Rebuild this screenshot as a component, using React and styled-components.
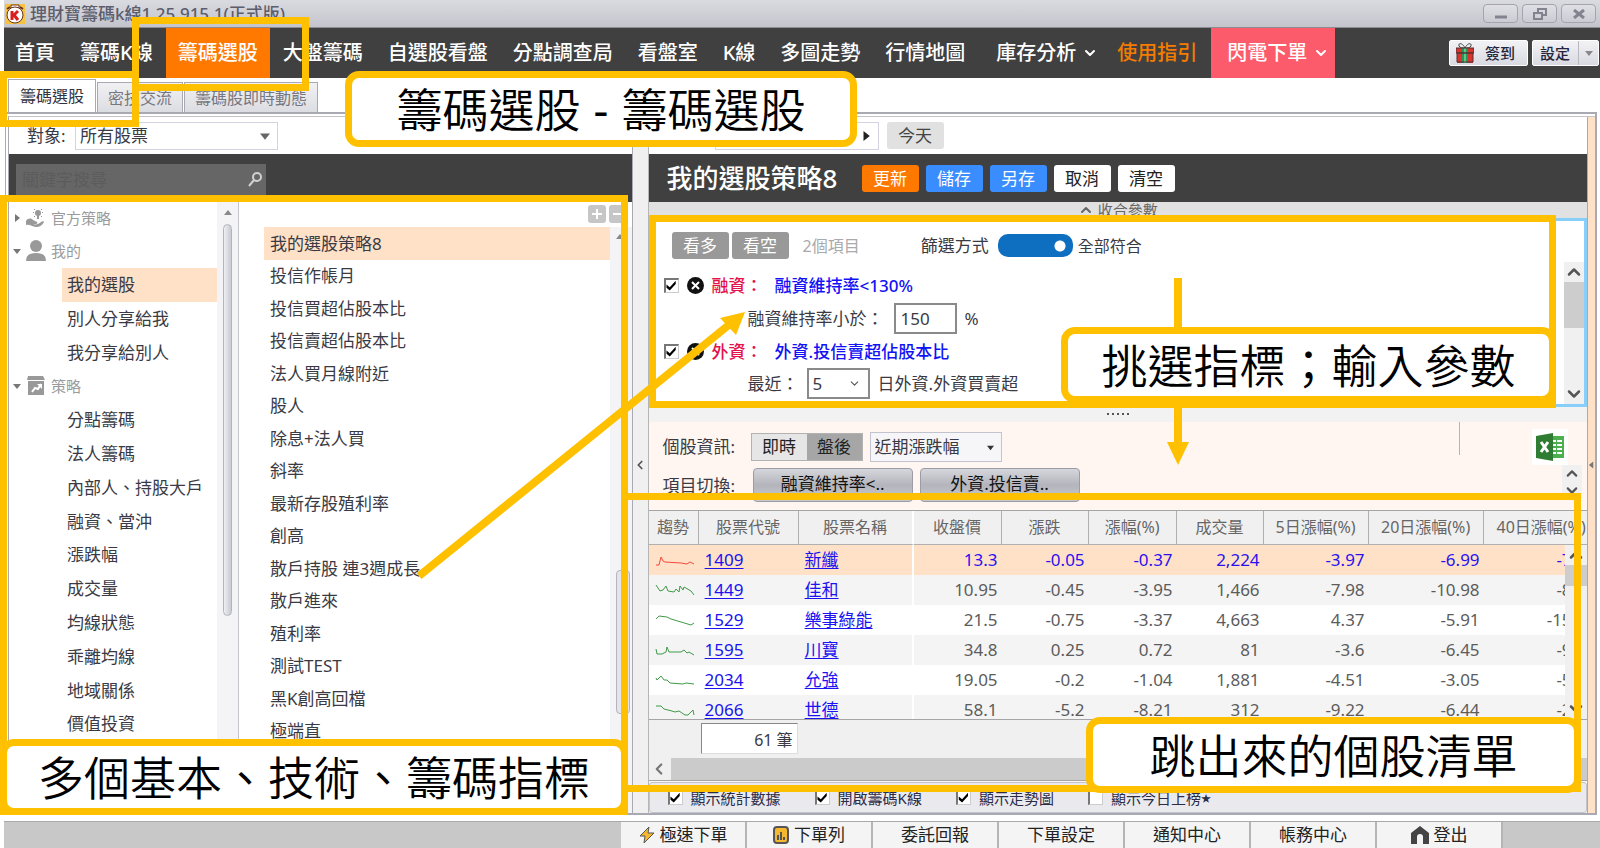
import React from 'react'
import styled, { createGlobalStyle, css } from 'styled-components'
import { ChevronDown, ChevronLeft, ChevronUp } from 'lucide-react'

const GlobalStyle = createGlobalStyle`
  * {
    box-sizing: border-box;
  }
  body {
    margin: 0;
    background: #fff;
    color: #3a3a44;
    font-family: 'Noto Sans', 'Noto Sans CJK TC', sans-serif;
    font-size: 17px;
    line-height: 24px;
  }
  button, input, select {
    font: inherit;
    color: inherit;
    margin: 0;
    padding: 0;
    border: 0;
    border-radius: 0;
  }
`

const Page = styled.div`
  position: relative;
  display: flex;
  flex-direction: column;
  min-height: 100vh;
  overflow: hidden;
  padding-left: 4px;
  white-space: nowrap;
`

/* ---------- title bar ---------- */

const TitleBar = styled.header`
  display: flex;
  align-items: center;
  height: 28px;
  padding: 0 4px 0 1px;
  gap: 5px;
  border-bottom: 1px solid #8c8c90;
  background: linear-gradient(#dadbe1, #c4c5cc);
`
const AppTitle = styled.h1`
  flex: 1;
  margin: 0;
  font-size: 17px;
  font-weight: 500;
  color: #5d5d6c;
`
const WindowButton = styled.button`
  display: flex;
  align-items: center;
  justify-content: center;
  width: 35px;
  height: 19px;
  margin-left: -1px;
  border: 1px solid #a4a4ae;
  border-radius: 4px;
  background: linear-gradient(#dfdfe5, #cbccd3);
`

/* ---------- main navigation ---------- */

const Nav = styled.nav`
  display: flex;
  align-items: center;
  height: 50px;
  gap: 1px;
  background: #404040;
`
const NavLink = styled.a`
  display: flex;
  align-items: center;
  gap: 6px;
  height: 100%;
  padding: ${(props) => props.$pad || '0 12px'};
  background: ${(props) => props.$bg || 'transparent'};
  color: ${(props) => props.$color || '#fff'};
  font-size: 20px;
  font-weight: 500;
  text-decoration: none;
`
const NavTools = styled.div`
  display: flex;
  gap: 4px;
  margin-left: auto;
  padding-right: 1px;
`
const ToolButton = styled.button`
  display: flex;
  align-items: center;
  justify-content: center;
  gap: ${(props) => (props.$split ? '8px' : '11px')};
  height: 26px;
  padding: 0 ${(props) => (props.$split ? '0' : '12px')} 0 ${(props) => (props.$split ? '7px' : '6px')};
  border: 1px solid #fff;
  border-radius: 2px;
  background: linear-gradient(#f2f2f6, #d9dae1);
  color: #24243c;
  font-size: 15px;
  font-weight: 500;
  line-height: 22px;
`
const SplitArrow = styled.span`
  display: flex;
  align-items: center;
  justify-content: center;
  width: 20px;
  height: 100%;
  border-left: 1px solid #b7b7c0;
`

/* ---------- tabs ---------- */

const Tabs = styled.div`
  display: flex;
  align-items: flex-end;
  height: 34px;
  padding-left: 4px;
`
const Tab = styled.button`
  height: ${(props) => (props.$active ? '33px' : '30px')};
  padding: 0 ${(props) => (props.$active ? '11px' : '10px')};
  border: 1px solid #a9a9b3;
  border-bottom: 0;
  margin-right: 1px;
  background: ${(props) => (props.$active ? '#fff' : 'linear-gradient(#f1f1f4, #dcdde2)')};
  color: ${(props) => (props.$active ? '#33333f' : '#77777f')};
  font-size: 16px;
`

/* ---------- work area ---------- */

const Frame = styled.div`
  flex: 1;
  display: flex;
  margin: 0 3px 0 1px;
  padding: 2px 0 0 2px;
  border: 2px solid #a9a9b3;
  border-left-width: 1px;
`
const Work = styled.main`
  flex: 1;
  display: flex;
  min-width: 0;
  border-top: 1px solid #c4c4c8;
  border-left: 1px solid #a9a9b3;
`
const LeftPane = styled.section`
  flex: 623 1 0;
  min-width: 0;
  display: flex;
  flex-direction: column;
  border-right: 1px solid #a9a9b3;
`
const VerticalSplit = styled.div`
  display: flex;
  align-items: center;
  justify-content: center;
  width: 16px;
  background: #f0f0f0;
  border-right: 1px solid #b5b5b5;
`
const RightPane = styled.section`
  flex: 939 1 0;
  min-width: 0;
  display: flex;
  flex-direction: column;
`
const SideStrip = styled.div`
  display: flex;
  align-items: center;
  justify-content: center;
  width: 8px;
  background: #ffe1c8;
  border-left: 1px solid #a9a9b3;
`
const FilterRow = styled.div`
  display: flex;
  align-items: center;
  height: 37px;
  gap: 8px;
  padding-left: ${(props) => props.$indent};
`
const SelectWrap = styled.span`
  display: grid;
  align-items: center;
  width: ${(props) => props.$width};
  height: ${(props) => props.$height || '28px'};
  border: ${(props) => props.$border || '1px solid #d3d3e2'};
  background: ${(props) => props.$bg || '#fff'};
  > * {
    grid-area: 1 / 1;
  }
  > svg {
    justify-self: end;
    margin-right: 7px;
    pointer-events: none;
  }
`
const Select = styled.select`
  appearance: none;
  width: 100%;
  padding-left: 4px;
  background: none;
  outline: none;
`
const TargetLabel = styled.label`
  width: 40px;
`
const SearchBar = styled.div`
  height: 48px;
  padding: 10px 7px;
  background: #404040;
`
const SearchBox = styled.label`
  display: flex;
  align-items: center;
  width: 250px;
  height: 31px;
  padding: 0 4px 0 6px;
  background: #666;
`
const SearchInput = styled.input`
  flex: 1;
  min-width: 0;
  background: none;
  outline: none;
  &::placeholder {
    color: #5c5c5c;
    opacity: 1;
  }
`
const LeftBody = styled.div`
  flex: 1;
  display: flex;
`
const Tree = styled.ul`
  width: 208px;
  margin: 0;
  padding: 0;
  list-style: none;
`
const TreeRow = styled.li`
  display: flex;
  align-items: center;
  height: 34px;
  margin-left: ${(props) => (props.$group ? '4px' : '53px')};
  padding-left: ${(props) => (props.$group ? '0' : '5px')};
  gap: 5px;
  background: ${(props) => (props.$selected ? '#ffe1c8' : 'none')};
  &:first-child {
    height: 32px;
  }
  &:nth-child(5n) {
    height: 33px;
  }
  ${(props) =>
    props.$group &&
    css`
      color: #9b9b9b;
      font-size: 15px;
    `}
`
const TreeScroll = styled.div`
  display: flex;
  flex-direction: column;
  align-items: center;
  width: 22px;
  padding-top: 7px;
  gap: 7px;
  background: #f4f4f7;
  border-right: 1px solid #c4c4cb;
`
const RoundThumb = styled.span`
  width: 9px;
  height: 392px;
  border: 1px solid #b3b4bf;
  border-radius: 5px;
  background: linear-gradient(90deg, #eeeff2, #c9cad2);
`
const Strategies = styled.div`
  flex: 1;
  display: grid;
  grid-template-columns: 1fr 22px;
  grid-template-rows: 25px 1fr;
  padding-left: 25px;
`
const ListTools = styled.div`
  grid-column: 1 / 3;
  display: flex;
  justify-content: flex-end;
  align-items: center;
  gap: 3px;
  padding: 0 5px 2px 0;
`
const SquareButton = styled.button`
  display: flex;
  align-items: center;
  justify-content: center;
  width: 18px;
  height: 18px;
  border-radius: 3px;
  background: #c6c6c6;
`
const StrategyList = styled.ul`
  margin: 0;
  padding: 0;
  list-style: none;
`
const StrategyRow = styled.li`
  display: flex;
  align-items: center;
  height: 33px;
  padding-left: 6px;
  background: ${(props) => (props.$selected ? '#ffe1c8' : 'none')};
  &:nth-child(even) {
    height: 32px;
  }
`
const ListScroll = styled.div`
  display: flex;
  flex-direction: column;
  padding: 6px 0 0 6px;
  gap: 329px;
  background: #f4f4f7;
`
const ListThumb = styled.span`
  width: 14px;
  height: 144px;
  border: 1px solid #b3b4bf;
  border-radius: 4px;
  background: #e4e4ea;
`

/* ---------- strategy head ---------- */

const DateBox = styled.div`
  display: flex;
  align-items: center;
  justify-content: flex-end;
  width: 164px;
  height: 28px;
  padding-right: 7px;
  border: 1px solid #d3d3e2;
`
const PushButton = styled.button`
  width: 57px;
  height: 27px;
  border-radius: 3px;
  background: ${(props) => props.$bg};
  color: ${(props) => props.$color || '#fff'};
  line-height: 25px;
`
const StrategyHead = styled.div`
  display: flex;
  align-items: center;
  height: 48px;
  gap: 7px;
  padding-left: 18px;
  background: #404040;
`
const StrategyName = styled.h2`
  width: 188px;
  margin: 0;
  color: #fff;
  font-size: 26px;
  font-weight: 500;
`
const CollapseBar = styled.button`
  display: flex;
  align-items: center;
  justify-content: center;
  gap: 4px;
  height: 16px;
  background: #e1e1e1;
  color: #666;
  font-size: 15px;
  line-height: 16px;
`

/* ---------- parameters ---------- */

const Params = styled.div`
  display: flex;
  flex-direction: column;
  height: 189px;
  border: 3px solid #87cefa;
  overflow: hidden;
`
const ParamTools = styled.div`
  display: flex;
  align-items: center;
  height: 41px;
  padding: 8px 0 0 20px;
  gap: 3px;
`
const ItemCount = styled.span`
  margin: 0 58px 0 11px;
  color: #aaa;
  font-size: 16px;
`
const Switch = styled.input`
  appearance: none;
  width: 75px;
  height: 23px;
  margin: 0 2px 0 6px;
  border-radius: 10px;
  background: radial-gradient(circle at 62px 12px, #fff 5px, #0e6fc0 6px);
`
const SmallText = styled.span`
  font-size: 16px;
`
const ParamScroller = styled.div`
  flex: 1;
  display: flex;
  min-height: 0;
`
const ParamList = styled.div`
  flex: 1;
  padding: 7px 0 0 12px;
`
const ParamRow = styled.div`
  display: flex;
  align-items: center;
  height: 33px;
  gap: 8px;
  padding-left: ${(props) => (props.$nested ? '84px' : '0')};
  &:last-child {
    height: 31px;
  }
`
const Check = styled.input`
  appearance: none;
  width: 15px;
  height: 15px;
  flex: none;
  background: #fff;
  border: 1px solid #ccc;
  border-top: 2px solid #777;
  border-left: 2px solid #777;
  &:checked::after {
    content: '';
    display: block;
    width: 11px;
    height: 11px;
    background: #000;
    clip-path: polygon(8% 40%, 38% 66%, 92% 6%, 92% 36%, 38% 96%, 8% 70%);
  }
`
const ParamGroup = styled.span`
  width: 55px;
  color: #e4114b;
  font-weight: 500;
`
const ParamName = styled.span`
  color: #1212f5;
  font-weight: 500;
`
const NumberInput = styled.input`
  width: 63px;
  height: 31px;
  margin-left: 2px;
  padding-left: 5px;
  border: 2px solid #8a8a8a;
  outline: none;
`

const FlatScroll = styled.div`
  display: flex;
  flex-direction: column;
  align-items: center;
  justify-content: space-between;
  width: 20px;
  flex: none;
  background: #f0f0f0;
`
const FlatThumb = styled.span`
  width: 100%;
  height: ${(props) => props.$height};
  margin-bottom: auto;
  background: #cdcdcd;
`
const MiniScroll = styled(FlatScroll)`
  height: 34px;
  margin: -3px 0 0 auto;
`
const HorizontalSplit = styled.div`
  display: flex;
  justify-content: center;
  height: 15px;
  gap: 3px;
  padding-top: 6px;
  background: #f2f2f2;
  span {
    width: 2px;
    height: 2px;
    background: #555;
  }
`

/* ---------- results ---------- */

const Results = styled.div`
  flex: 1;
  display: flex;
  flex-direction: column;
  background: #fff6f2;
`
const InfoRow = styled.div`
  display: flex;
  align-items: center;
  height: 46px;
  padding: 10px 19px 6px 14px;
`
const SwitchRow = styled.div`
  display: flex;
  align-items: flex-start;
  height: 42px;
  padding: 0 5px 0 14px;
`
const RowLabel = styled.span`
  width: 88px;
  line-height: 36px;
`
const Segment = styled.div`
  display: flex;
  height: 28px;
  margin-right: 7px;
  border: 1px solid #b2b2b2;
`
const SegmentButton = styled.button`
  width: 55px;
  background: ${(props) => (props.$active ? '#a6a6a6' : '#e6e6e6')};
  color: #222;
`
const Divider = styled.span`
  align-self: flex-start;
  width: 1px;
  height: 33px;
  margin: -10px 72px 0 auto;
  background: #b5b5b5;
`
const ExcelButton = styled.button`
  display: flex;
  align-items: center;
  justify-content: center;
  width: 36px;
  height: 36px;
  background: #fff;
`
const GradientButton = styled.button`
  width: 160px;
  height: 34px;
  margin: 0 5px 0 2px;
  padding-bottom: 3px;
  border: 1px solid #9b9ca6;
  border-radius: 4px;
  background: linear-gradient(#d6d7dc, #b4b5bc 50%, #c9cacf);
  color: #111;
`
const TableArea = styled.div`
  position: relative;
  height: 210px;
  overflow: hidden;
  background: #fff;
  border-top: 1px solid #a5a5a5;
  border-bottom: 1px solid #a5a5a5;
`
const Table = styled.table`
  width: 951px;
  table-layout: fixed;
  border-collapse: separate;
  border-spacing: 0;
`
const HeadCell = styled.th`
  width: ${(props) => props.$width};
  height: 34px;
  padding: 0 0 2px;
  border-right: 1px solid #b0b0b0;
  border-bottom: 1px solid #b0b0b0;
  background: #f0f0f0;
  color: #666;
  font-size: 16px;
  font-weight: 400;
  &:nth-child(3) {
    border-right: 2px solid #fff;
  }
`
const Row = styled.tr`
  height: 30px;
  background: ${(props) => (props.$selected ? '#ffe1c8' : '#fff')};
  color: ${(props) => (props.$selected ? '#2a12f0' : '#5c5c5c')};
  &:nth-child(even) {
    background: #f4f4f4;
  }
`
const Cell = styled.td`
  height: 30px;
  padding: 0 4px 0 6px;
  text-align: ${(props) => (props.$left ? 'left' : 'right')};
  &:nth-child(3) {
    border-right: 2px solid #fff;
  }
  a {
    color: #1a12f0;
    text-underline-offset: 2px;
  }
  svg {
    display: block;
  }
`
const TableScroll = styled(FlatScroll)`
  position: absolute;
  top: 34px;
  right: 0;
  bottom: 0;
  width: 22px;
`
const TableFooter = styled.div`
  display: flex;
  height: 38px;
  padding: 3px 52px;
  background: #f0f0f0;
`
const TotalInput = styled.input`
  width: 97px;
  height: 31px;
  padding-right: 4px;
  border: 1px solid #ddd;
  border-top-color: #888;
  border-left-color: #888;
  text-align: right;
  font-size: 16px;
`
const WideScroll = styled.div`
  display: flex;
  align-items: center;
  height: 23px;
  background: #f0f0f0;
  border-bottom: 1px solid #a5a5a5;
  gap: 3px;
  padding-left: 1px;
`
const WideThumb = styled.span`
  flex: 1;
  height: 100%;
  background: #cbcbcb;
`
const Options = styled.div`
  flex: 1;
  display: flex;
  align-items: center;
  min-height: 30px;
  margin-top: 1px;
  padding-left: 18px;
  border: 1px solid #c3c4cc;
  border-radius: 3px;
  background: #eaeaee;
  gap: 34px;
`
const Option = styled.label`
  display: flex;
  align-items: center;
  color: #2c2c48;
  font-size: 15px;
  input {
    margin-right: 8px;
  }
`
const Star = styled.span`
  font-size: 10px;
`

/* ---------- bottom bar ---------- */

const BottomBar = styled.footer`
  display: flex;
  height: 27px;
  margin-top: 6px;
  padding-left: 617px;
  border-top: 1px solid #a9a9ac;
  background: #c8c8c8;
`
const BottomButton = styled.button`
  display: flex;
  align-items: center;
  justify-content: center;
  gap: 5px;
  width: 126px;
  border-right: 2px solid #b5b5b5;
  background: #f4f4f4;
  color: #222;
`

/* ---------- guide layer drawn over the app ---------- */

const Guide = styled.div`
  position: absolute;
  inset: 0;
  pointer-events: none;
`
const Box = styled.div`
  position: absolute;
  left: ${(props) => props.$x}px;
  top: ${(props) => props.$y}px;
  width: ${(props) => props.$w}px;
  height: ${(props) => props.$h}px;
  border: 7px solid #ffc000;
`
const Callout = styled(Box)`
  display: flex;
  align-items: center;
  justify-content: center;
  padding-top: 4px;
  border-radius: 14px;
  background: #fff;
  color: #000;
  font-family: 'Liberation Sans', 'Noto Sans CJK TC', sans-serif;
  font-size: 46px;
  font-weight: 350;
  line-height: 56px;
`
const Arrows = styled.svg`
  position: absolute;
  left: 0;
  top: 0;
`

const NAV = [
  { text: '首頁', pad: '0 12px 0 11px' },
  { text: '籌碼K線' },
  { text: '籌碼選股', bg: '#ff7800' },
  { text: '大盤籌碼' },
  { text: '自選股看盤' },
  { text: '分點調查局' },
  { text: '看盤室' },
  { text: 'K線' },
  { text: '多圖走勢' },
  { text: '行情地圖' },
  { text: '庫存分析', pad: '0 4px 0 18px', arrow: true },
  { text: '使用指引', color: '#f57c00', pad: '0 13px 0 14px' },
  { text: '閃電下單', bg: '#fc5b6b', pad: '0 6px 0 16px', arrow: true },
]

const TREE = [
  { text: '官方策略', icon: 'hand' },
  { text: '我的', icon: 'user', open: true },
  { text: '我的選股', selected: true },
  { text: '別人分享給我' },
  { text: '我分享給別人' },
  { text: '策略', icon: 'store', open: true },
  { text: '分點籌碼' },
  { text: '法人籌碼' },
  { text: '內部人、持股大戶' },
  { text: '融資、當沖' },
  { text: '漲跌幅' },
  { text: '成交量' },
  { text: '均線狀態' },
  { text: '乖離均線' },
  { text: '地域關係' },
  { text: '價值投資' },
]

const STRATEGIES = [
  '我的選股策略8', '投信作帳月', '投信買超佔股本比', '投信賣超佔股本比',
  '法人買月線附近', '股人', '除息+法人買', '斜率', '最新存股殖利率', '創高',
  '散戶持股 連3週成長', '散戶進來', '殖利率', '測試TEST', '黑K創高回檔', '極端直',
]

const COLUMNS = [
  ['趨勢', '50px'], ['股票代號', '100px'], ['股票名稱', '115px'], ['收盤價', '88px'],
  ['漲跌', '87px'], ['漲幅(%)', '88px'], ['成交量', '87px'], ['5日漲幅(%)', '105px'],
  ['20日漲幅(%)', '115px'], ['40日漲幅(%)', '116px'],
]

const STOCKS = [
  { id: '1409', name: '新纖', values: ['13.3', '-0.05', '-0.37', '2,224', '-3.97', '-6.99', '-7.01'], line: '1,13 4,13 6,5 8,9 10,10 26,11 32,12 35,10 39,12' },
  { id: '1449', name: '佳和', values: ['10.95', '-0.45', '-3.95', '1,466', '-7.98', '-10.98', '-8.06'], line: '1,3 5,9 8,8 11,4 13,9 19,10 21,7 24,10 25,4 28,8 29,5 36,9 39,13' },
  { id: '1529', name: '樂事綠能', values: ['21.5', '-0.75', '-3.37', '4,663', '4.37', '-5.91', '-15.02'], line: '1,7 4,4 12,5 16,7 26,10 36,13 39,11' },
  { id: '1595', name: '川寶', values: ['34.8', '0.25', '0.72', '81', '-3.6', '-6.45', '-9.11'], line: '1,7 2,12 7,12 11,10 12,5 14,10 26,10 29,8 32,11 34,10 39,13' },
  { id: '2034', name: '允強', values: ['19.05', '-0.2', '-1.04', '1,881', '-4.51', '-3.05', '-5.08'], line: '1,6 2,8 6,4 9,8 12,8 15,11 28,12 31,11 39,12' },
  { id: '2066', name: '世德', values: ['58.1', '-5.2', '-8.21', '312', '-9.22', '-6.44', '-2.30'], line: '1,4 6,4 9,7 17,9 20,10 24,9 30,13 33,13 38,8 39,13' },
]

function Triangle({ dir = 'down', size = 8, color = '#666' }) {
  const paths = { down: 'M0 2h8L4 7z', up: 'M0 6h8L4 1z', right: 'M2 0v8l5-4z', left: 'M6 0v8L1 4z' }
  return (
    <svg width={size} height={size} viewBox="0 0 8 8" aria-hidden="true">
      <path d={paths[dir]} fill={color} />
    </svg>
  )
}

function TreeIcon({ name }) {
  return (
    <svg width="20" height="22" viewBox="0 0 20 22" fill="#999" aria-hidden="true">
      {name === 'hand' && (
        <>
          <path d="M0 14c2-3 5-3 7-1l4 2c1 1 0 2-1 2H7c3 1 6 0 8-2 1-1 3-1 3 0-2 4-5 5-8 5-4 0-6-3-10-2z" />
          <circle cx="12" cy="6" r="3" />
          <path d="M11 8h2v4h-2zM7 5h1v1H7zM16 5h1v1h-1zM8 2h1v1H8zM15 2h1v1h-1zM8 9h1v1H8zM15 9h1v1h-1z" />
        </>
      )}
      {name === 'user' && (
        <>
          <circle cx="10" cy="6" r="6" />
          <path d="M0 21c0-6 4-8 10-8s10 2 10 8z" />
        </>
      )}
      {name === 'store' && (
        <>
          <path d="M2 1h15l2 4H1zM2 6h16v14H2z" />
          <path d="M6 17l3-4 3 1 3-5" fill="none" stroke="#fff" strokeWidth="2" />
          <path d="M11 9h5v5z" fill="#fff" />
        </>
      )}
    </svg>
  )
}

function Gift() {
  return (
    <svg width="18" height="20" viewBox="0 0 18 20" aria-hidden="true">
      <path d="M9 5C6-1 2 0 3 3c1 2 4 2 6 2 2 0 5 0 6-2 1-3-3-4-6 2z" fill="#eee" stroke="#444" />
      <path d="M0 5h18v5H0zM1 10h16v10H1z" fill="#d6342c" />
      <path d="M6 5h6v15H6z" fill="#27955a" />
      <path d="M8 5h2v15H8z" fill="#62c58a" />
      <path d="M0 5h18v5H0zM1 10h16v9H1z" fill="none" stroke="#503030" />
    </svg>
  )
}

function AppLogo() {
  return (
    <svg width="20" height="20" viewBox="0 0 20 20" aria-hidden="true">
      <path d="M0 0h20v20H0z" fill="#f5c242" />
      <path d="M6 1h8v3H6z" fill="#fff" stroke="#6a3320" />
      <path d="M2 5l3-2M18 5l-3-2" stroke="#6a3320" strokeWidth="2" />
      <circle cx="10" cy="11" r="8" fill="#fff" stroke="#6a3320" />
      <path d="M7 7v9M13 7l-4 4 4 5" fill="none" stroke="#d81e1e" strokeWidth="3" />
    </svg>
  )
}

function ExcelIcon() {
  return (
    <svg width="28" height="28" viewBox="0 0 28 28" aria-hidden="true">
      <path d="M15 3h13v22H15z" fill="#4caf50" />
      <path d="M16 7h4v2h-4zM21 7h5v2h-5zM16 11h4v2h-4zM21 11h5v2h-5zM16 15h4v2h-4zM21 15h5v2h-5zM16 19h4v2h-4zM21 19h5v2h-5z" fill="#fff" />
      <path d="M0 3L17 0v28L0 25z" fill="#2e7d32" />
      <path d="M5 9l7 10M12 9L5 19" stroke="#fff" strokeWidth="3" />
    </svg>
  )
}

function RemoveIcon() {
  return (
    <svg width="17" height="17" viewBox="0 0 17 17" aria-hidden="true">
      <circle cx="8.5" cy="8.5" r="8.5" fill="#111" />
      <path d="M5 5l7 7M12 5l-7 7" stroke="#fff" strokeWidth="2" />
    </svg>
  )
}

function LeftSide() {
  return (
    <LeftPane>
      <FilterRow $indent="18px">
        <TargetLabel htmlFor="target">對象:</TargetLabel>
        <SelectWrap $width="203px">
          <Select id="target"><option>所有股票</option></Select>
          <Triangle size={10} />
        </SelectWrap>
      </FilterRow>
      <SearchBar>
        <SearchBox>
          <SearchInput placeholder="關鍵字搜尋" aria-label="關鍵字搜尋" />
          <svg width="14" height="16" viewBox="0 0 14 16" fill="none" stroke="#d0d0d0" strokeWidth="2">
            <circle cx="9" cy="5" r="4" />
            <path d="M6 8l-5 6" />
          </svg>
        </SearchBox>
      </SearchBar>
      <LeftBody>
        <Tree>
          {TREE.map((item) => (
            <TreeRow key={item.text} $group={!!item.icon} $selected={item.selected}>
              {item.icon && <Triangle dir={item.open ? 'down' : 'right'} color="#777" />}
              {item.icon && <TreeIcon name={item.icon} />}
              {item.text}
            </TreeRow>
          ))}
        </Tree>
        <TreeScroll>
          <Triangle dir="up" color="#888" />
          <RoundThumb />
        </TreeScroll>
        <Strategies>
          <ListTools>
            <SquareButton aria-label="新增">
              <svg width="10" height="10"><path d="M5 0v10M0 5h10" stroke="#fff" strokeWidth="2" /></svg>
            </SquareButton>
            <SquareButton aria-label="移除">
              <svg width="10" height="10"><path d="M0 5h10" stroke="#fff" strokeWidth="2" /></svg>
            </SquareButton>
          </ListTools>
          <StrategyList>
            {STRATEGIES.map((name, i) => (
              <StrategyRow key={name} $selected={i === 0}>{name}</StrategyRow>
            ))}
          </StrategyList>
          <ListScroll>
            <Triangle dir="up" color="#888" />
            <ListThumb />
          </ListScroll>
        </Strategies>
      </LeftBody>
    </LeftPane>
  )
}

function ParamPanel() {
  return (
    <Params>
      <ParamTools>
        <PushButton $bg="#999">看多</PushButton>
        <PushButton $bg="#999">看空</PushButton>
        <ItemCount>2個項目</ItemCount>
        <label htmlFor="match">篩選方式</label>
        <Switch id="match" type="checkbox" defaultChecked />
        <SmallText>全部符合</SmallText>
      </ParamTools>
      <ParamScroller>
        <ParamList>
          <ParamRow>
            <Check type="checkbox" defaultChecked aria-label="融資維持率<130%" />
            <RemoveIcon />
            <ParamGroup>融資：</ParamGroup>
            <ParamName>融資維持率&lt;130%</ParamName>
          </ParamRow>
          <ParamRow $nested>
            <label htmlFor="rate">融資維持率小於：</label>
            <NumberInput id="rate" defaultValue="150" />
            <span>%</span>
          </ParamRow>
          <ParamRow>
            <Check type="checkbox" defaultChecked aria-label="外資.投信賣超佔股本比" />
            <RemoveIcon />
            <ParamGroup>外資：</ParamGroup>
            <ParamName>外資.投信賣超佔股本比</ParamName>
          </ParamRow>
          <ParamRow $nested>
            <label htmlFor="days">最近：</label>
            <SelectWrap $width="63px" $height="31px" $border="2px solid #8a8a8a">
              <Select id="days"><option>5</option></Select>
              <ChevronDown size={13} color="#555" />
            </SelectWrap>
            <span>日外資.外資買賣超</span>
          </ParamRow>
        </ParamList>
        <FlatScroll>
          <ChevronUp size={20} color="#555" strokeWidth={3} />
          <FlatThumb $height="46px" />
          <ChevronDown size={20} color="#555" strokeWidth={3} />
        </FlatScroll>
      </ParamScroller>
    </Params>
  )
}

function StockTable() {
  return (
    <TableArea>
      <Table>
        <thead>
          <tr>
            {COLUMNS.map(([text, width]) => <HeadCell key={text} $width={width}>{text}</HeadCell>)}
          </tr>
        </thead>
        <tbody>
          {STOCKS.map((stock, i) => (
            <Row key={stock.id} $selected={i === 0}>
              <Cell $left>
                <svg width="40" height="16" viewBox="0 0 40 16">
                  <polyline points={stock.line} fill="none" stroke={i === 0 ? '#f5483c' : '#3f9a48'} />
                </svg>
              </Cell>
              <Cell $left><a href="#stock">{stock.id}</a></Cell>
              <Cell $left><a href="#stock">{stock.name}</a></Cell>
              {stock.values.map((value, n) => <Cell key={n}>{value}</Cell>)}
            </Row>
          ))}
        </tbody>
      </Table>
      <TableScroll>
        <ChevronUp size={20} color="#555" strokeWidth={3} />
        <FlatThumb $height="21px" />
        <ChevronDown size={20} color="#555" strokeWidth={3} />
      </TableScroll>
    </TableArea>
  )
}

function ResultPanel() {
  return (
    <Results>
      <InfoRow>
        <RowLabel>個股資訊:</RowLabel>
        <Segment>
          <SegmentButton>即時</SegmentButton>
          <SegmentButton $active>盤後</SegmentButton>
        </Segment>
        <SelectWrap $width="132px" $height="30px" $border="1px solid #c3c3cf" $bg="#f6f6f8">
          <Select aria-label="個股資訊"><option>近期漲跌幅</option></Select>
          <Triangle size={7} color="#333" />
        </SelectWrap>
        <Divider />
        <ExcelButton aria-label="匯出"><ExcelIcon /></ExcelButton>
      </InfoRow>
      <SwitchRow>
        <RowLabel>項目切換:</RowLabel>
        <GradientButton>融資維持率&lt;..</GradientButton>
        <GradientButton>外資.投信賣..</GradientButton>
        <MiniScroll>
          <ChevronUp size={18} color="#555" strokeWidth={3} />
          <ChevronDown size={18} color="#555" strokeWidth={3} />
        </MiniScroll>
      </SwitchRow>
      <StockTable />
      <TableFooter>
        <TotalInput readOnly value="61 筆" aria-label="筆數" />
      </TableFooter>
      <WideScroll>
        <ChevronLeft size={18} color="#777" strokeWidth={3} />
        <WideThumb />
      </WideScroll>
      <Options>
        <Option><Check type="checkbox" defaultChecked />顯示統計數據</Option>
        <Option><Check type="checkbox" defaultChecked />開啟籌碼K線</Option>
        <Option><Check type="checkbox" defaultChecked />顯示走勢圖</Option>
        <Option><Check type="checkbox" />顯示今日上榜<Star>★</Star></Option>
      </Options>
    </Results>
  )
}

function GuideLayer() {
  return (
    <Guide>
      <Box $x={132} $y={17} $w={177} $h={74} />
      <Box $x={0} $y={71} $w={139} $h={56} />
      <Box $x={0} $y={195} $w={628} $h={620} />
      <Box $x={649} $y={215} $w={907} $h={193} />
      <Box $x={621} $y={493} $w={960} $h={299} />
      <Arrows width="1600" height="848" viewBox="0 0 1600 848">
        <path d="M419 576L730 324M1178 278v60M1178 400v44" fill="none" stroke="#ffc000" strokeWidth="8" />
        <path d="M745 312l-25 6 16 17zM1167 442h22l-11 23z" fill="#ffc000" />
      </Arrows>
      <Callout $x={345} $y={71} $w={512} $h={76}>籌碼選股 - 籌碼選股</Callout>
      <Callout $x={1061} $y={327} $w={495} $h={76}>挑選指標；輸入參數</Callout>
      <Callout $x={1086} $y={717} $w={495} $h={76}>跳出來的個股清單</Callout>
      <Callout $x={0} $y={739} $w={628} $h={76}>多個基本、技術、籌碼指標</Callout>
    </Guide>
  )
}

function App() {
  return (
    <Page>
      <GlobalStyle />
      <TitleBar>
        <AppLogo />
        <AppTitle>理財寶籌碼k線1.25.915.1(正式版)</AppTitle>
        <WindowButton aria-label="最小化">
          <svg width="12" height="12"><path d="M0 9h12" stroke="#83838f" strokeWidth="3" /></svg>
        </WindowButton>
        <WindowButton aria-label="還原">
          <svg width="14" height="12" fill="none" stroke="#83838f" strokeWidth="2"><path d="M5 4V1h8v6h-4M1 5h8v6H1z" /></svg>
        </WindowButton>
        <WindowButton aria-label="關閉">
          <svg width="12" height="10"><path d="M1 1l10 8M11 1L1 9" stroke="#83838f" strokeWidth="3" /></svg>
        </WindowButton>
      </TitleBar>
      <Nav>
        {NAV.map((item) => (
          <NavLink key={item.text} href="#nav" $bg={item.bg} $color={item.color} $pad={item.pad}>
            {item.text}
            {item.arrow && <ChevronDown size={16} strokeWidth={3} />}
          </NavLink>
        ))}
        <NavTools>
          <ToolButton><Gift />簽到</ToolButton>
          <ToolButton $split>設定<SplitArrow><Triangle color="#888" /></SplitArrow></ToolButton>
        </NavTools>
      </Nav>
      <Tabs>
        <Tab $active>籌碼選股</Tab>
        <Tab>密技交流</Tab>
        <Tab>籌碼股即時動態</Tab>
      </Tabs>
      <Frame>
        <Work>
          <LeftSide />
          <VerticalSplit><ChevronLeft size={14} color="#555" strokeWidth={3} /></VerticalSplit>
          <RightPane>
            <FilterRow $indent="66px">
              <DateBox><Triangle dir="right" size={10} color="#222" /></DateBox>
              <PushButton $bg="#e1e1e1" $color="#444">今天</PushButton>
            </FilterRow>
            <StrategyHead>
              <StrategyName>我的選股策略8</StrategyName>
              <PushButton $bg="#ff7800">更新</PushButton>
              <PushButton $bg="#3a8dff">儲存</PushButton>
              <PushButton $bg="#3a8dff">另存</PushButton>
              <PushButton $bg="#fff" $color="#222">取消</PushButton>
              <PushButton $bg="#fff" $color="#222">清空</PushButton>
            </StrategyHead>
            <CollapseBar><ChevronUp size={16} strokeWidth={3} />收合參數</CollapseBar>
            <ParamPanel />
            <HorizontalSplit><span /><span /><span /><span /><span /></HorizontalSplit>
            <ResultPanel />
          </RightPane>
          <SideStrip><Triangle dir="left" color="#777" /></SideStrip>
        </Work>
      </Frame>
      <BottomBar>
        <BottomButton>
          <svg width="16" height="18" viewBox="0 0 16 18"><path d="M10 1L1 10h5l-1 7 10-10H9z" fill="#f5b82e" stroke="#555" /></svg>
          極速下單
        </BottomButton>
        <BottomButton>
          <svg width="16" height="18" viewBox="0 0 16 18">
            <rect x="1" y="1" width="14" height="16" rx="3" fill="#f5b82e" stroke="#555" strokeWidth="2" />
            <path d="M5 14V9M8 14V6M11 14v-3" stroke="#555" strokeWidth="2" />
          </svg>
          下單列
        </BottomButton>
        <BottomButton>委託回報</BottomButton>
        <BottomButton>下單設定</BottomButton>
        <BottomButton>通知中心</BottomButton>
        <BottomButton>帳務中心</BottomButton>
        <BottomButton>
          <svg width="18" height="18" viewBox="0 0 18 18"><path d="M9 0l9 7v11h-6v-7a3 3 0 0 0-6 0v7H0V7z" fill="#444" /></svg>
          登出
        </BottomButton>
      </BottomBar>
      <GuideLayer />
    </Page>
  )
}

export default App
